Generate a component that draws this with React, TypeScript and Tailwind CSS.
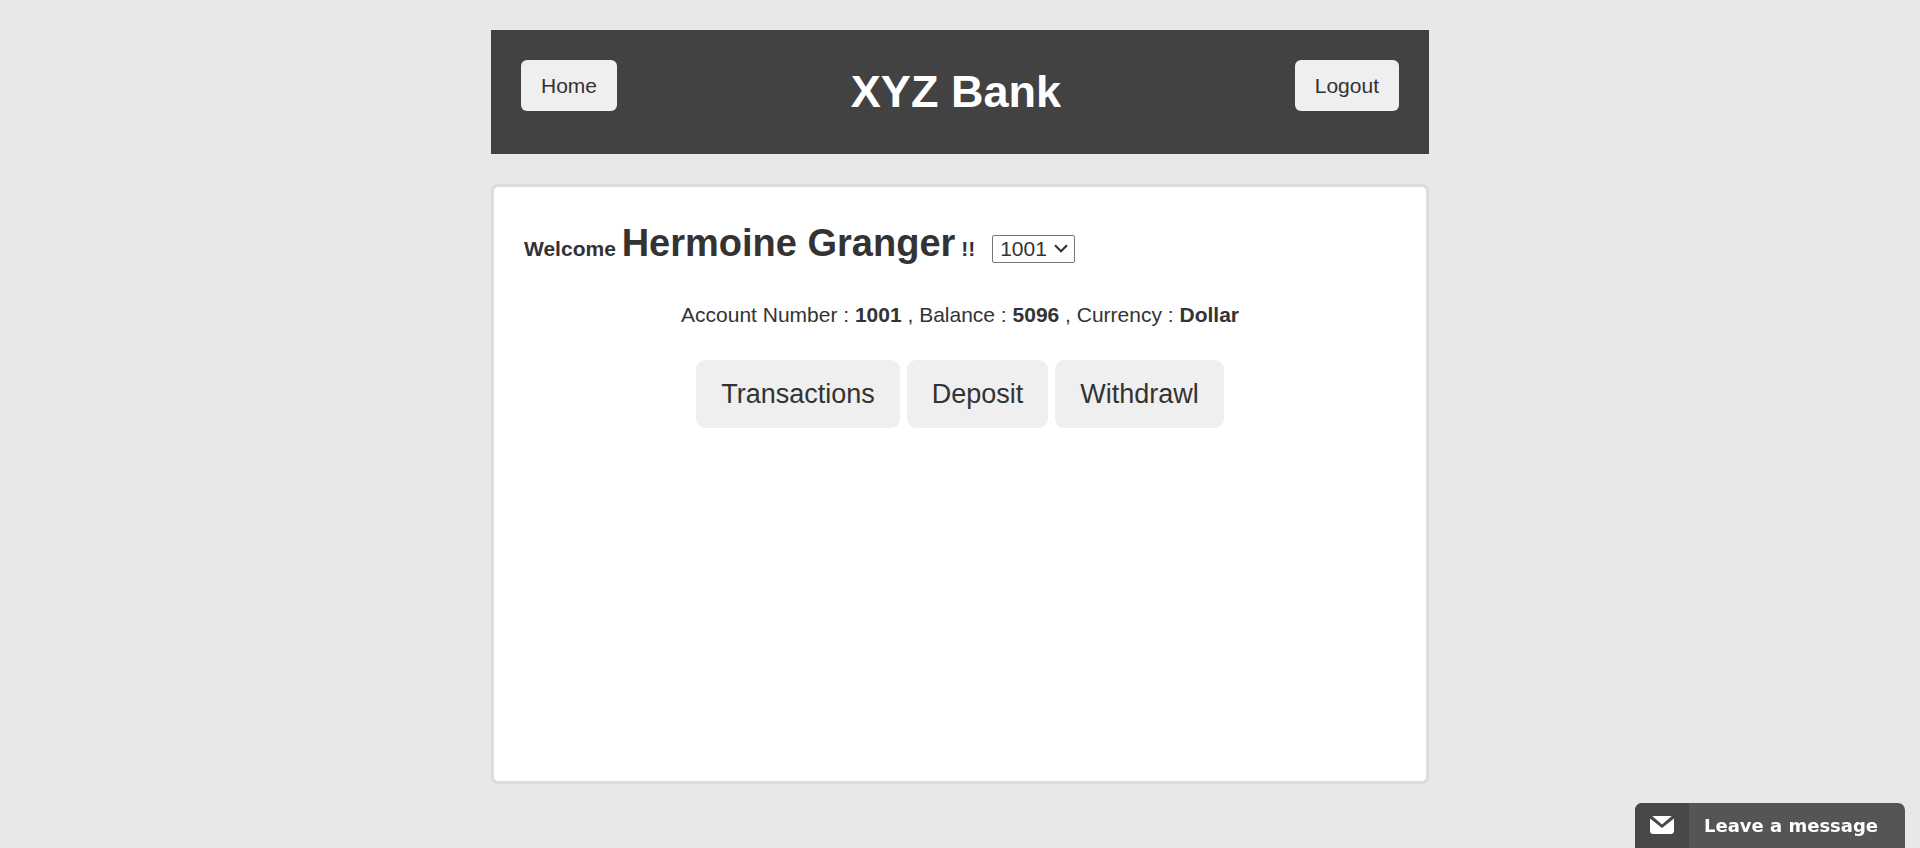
import { useState } from "react";

const accounts = [
  { number: "1001", balance: 5096, currency: "Dollar" },
  { number: "1002", balance: 0, currency: "Pound" },
  { number: "1003", balance: 0, currency: "Rupee" },
];

const actions = ["Transactions", "Deposit", "Withdrawl"];

function Header() {
  return (
    <header className="flex min-h-[124px] items-start bg-[#424242] p-[30px]">
      <button type="button" className="h-[51px] rounded-md bg-[#efefef] px-[20px]">
        Home
      </button>
      <h1 className="flex-1 pt-[6px] text-center text-[45px] leading-[52px] font-bold text-white">
        XYZ Bank
      </h1>
      <button type="button" className="h-[51px] rounded-md bg-[#efefef] px-[20px]">
        Logout
      </button>
    </header>
  );
}

function AccountSelect({ value, onChange }: { value: string; onChange: (v: string) => void }) {
  return (
    <span className="relative ml-[17px] inline-block">
      <select
        aria-label="Account number"
        value={value}
        onChange={(e) => onChange(e.target.value)}
        className="h-[28px] w-[83px] appearance-none rounded-[2px] border border-[#767676] bg-white pl-[7px] leading-[26px]"
      >
        {accounts.map((a) => (
          <option key={a.number}>{a.number}</option>
        ))}
      </select>
      <svg
        viewBox="0 0 14 9"
        className="pointer-events-none absolute top-[10px] right-[7px] h-[9px] w-[14px]"
        fill="none"
        stroke="#333333"
        strokeWidth="2.2"
      >
        <path d="M1 1.2 7 7.2 13 1.2" />
      </svg>
    </span>
  );
}

function MessageTab() {
  return (
    <button
      type="button"
      className="fixed right-[15px] bottom-0 flex h-[45px] w-[270px] items-stretch overflow-hidden rounded-t-[7px] bg-[#555555] text-white"
    >
      <span className="flex w-[54px] items-center justify-center bg-[#484848] pb-[2px]">
        <svg viewBox="0 0 24 18" className="h-[18px] w-[24px]" fill="currentColor">
          <path d="M2.2 0H21.8L12 8.4Z" />
          <path d="M0 2.6 12 12 24 2.6V14.5A3.5 3.5 0 0 1 20.5 18H3.5A3.5 3.5 0 0 1 0 14.5Z" />
        </svg>
      </span>
      <span className="flex items-center pl-[15px] font-['DejaVu_Sans',sans-serif] text-[18px] font-bold">
        Leave a message
      </span>
    </button>
  );
}

export default function App() {
  const [selected, setSelected] = useState("1001");
  const account = accounts.find((a) => a.number === selected) ?? accounts[0];

  return (
    <div className="min-h-screen bg-[#e8e8e8] px-4 py-[30px] font-['Liberation_Sans',Arial,sans-serif] text-[21px] leading-[30px] text-[#333333]">
      <div className="mx-auto flex max-w-[938px] flex-col gap-[30px]">
        <Header />
        <main className="min-h-[600px] rounded-[7px] border-[3px] border-[#dcdcdc] bg-white px-[30px] pt-[29px]">
          <div className="flex items-baseline">
            <strong>
              Welcome <span className="text-[38px] leading-[54px]">Hermoine Granger</span> !!
            </strong>
            <AccountSelect value={selected} onChange={setSelected} />
          </div>
          <p className="mt-[30px] text-center">
            Account Number : <strong>{account.number}</strong> , Balance :{" "}
            <strong>{account.balance}</strong> , Currency : <strong>{account.currency}</strong>
          </p>
          <div className="mt-[30px] flex justify-center gap-[7px] text-[27px]">
            {actions.map((label) => (
              <button key={label} type="button" className="h-[68px] rounded-[9px] bg-[#efefef] px-[25px]">
                {label}
              </button>
            ))}
          </div>
        </main>
      </div>
      <MessageTab />
    </div>
  );
}
